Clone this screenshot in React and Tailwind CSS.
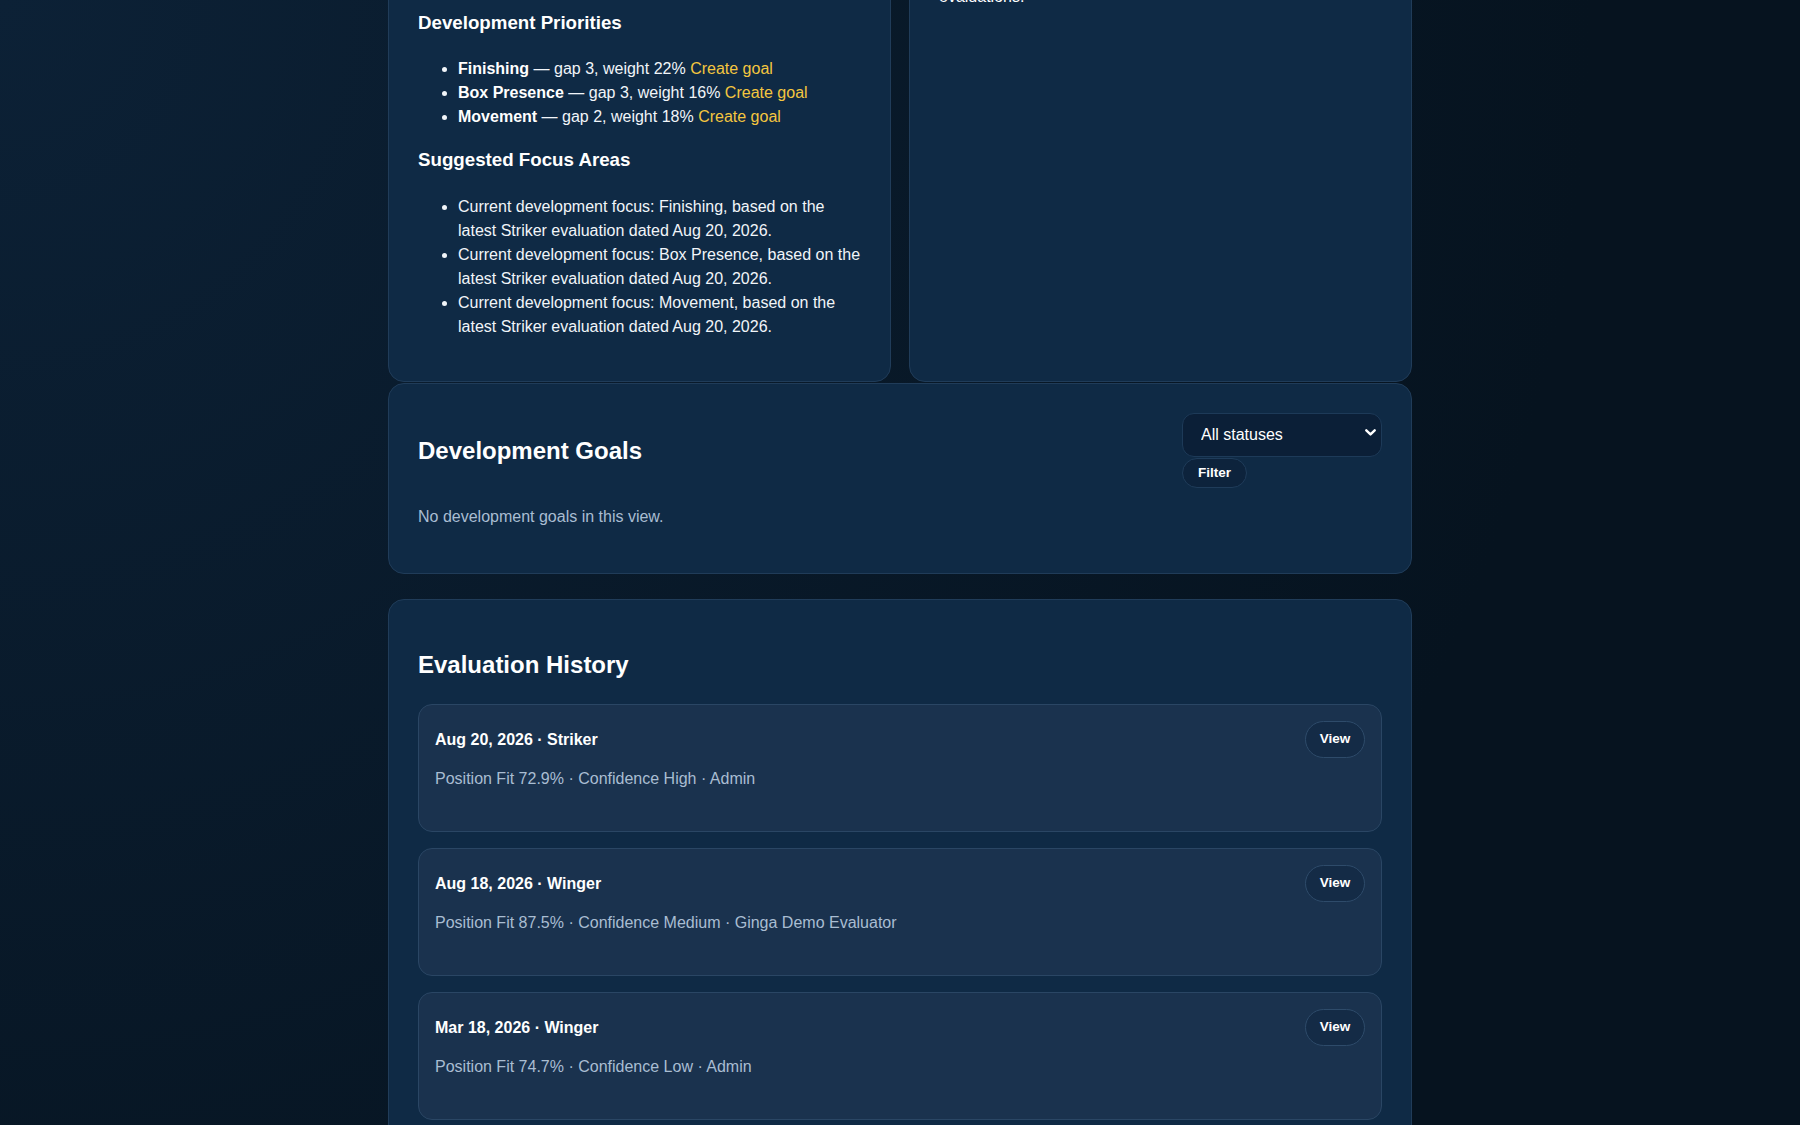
const priorities = [
  { skill: 'Finishing', gap: 3, weight: 22 },
  { skill: 'Box Presence', gap: 3, weight: 16 },
  { skill: 'Movement', gap: 2, weight: 18 },
]

const evaluations = [
  { date: 'Aug 20, 2026', position: 'Striker', fit: '72.9', confidence: 'High', evaluator: 'Admin' },
  { date: 'Aug 18, 2026', position: 'Winger', fit: '87.5', confidence: 'Medium', evaluator: 'Ginga Demo Evaluator' },
  { date: 'Mar 18, 2026', position: 'Winger', fit: '74.7', confidence: 'Low', evaluator: 'Admin' },
]

const card = 'rounded-2xl border border-[#203c59] bg-[#0f2a45] p-[29px]'

function ChevronDown() {
  return (
    <svg width="11" height="7" viewBox="0 0 11 7" fill="none" className="text-white">
      <path d="M1.3 1.3 5.5 5.4 9.7 1.3" stroke="currentColor" strokeWidth="2.4" strokeLinecap="round" strokeLinejoin="round" />
    </svg>
  )
}

function PlanCard() {
  const latest = evaluations[0]
  return (
    <div className={card}>
      <h3 className="mt-[24px] text-[18.72px] font-bold leading-[28px] text-white">Development Priorities</h3>
      <ul className="mt-[20px] list-disc pl-10 text-base leading-6">
        {priorities.map(p => (
          <li key={p.skill}>
            <strong className="font-bold text-white">{p.skill}</strong> — gap {p.gap}, weight {p.weight}%{' '}
            <a href="#" className="text-[#f4c63f]">Create goal</a>
          </li>
        ))}
      </ul>
      <h3 className="mt-[17px] text-[18.72px] font-bold leading-[28px] text-white">Suggested Focus Areas</h3>
      <ul className="mt-[21px] mb-[13px] -mr-[2px] list-disc pl-10 text-base leading-6">
        {priorities.map(p => (
          <li key={p.skill}>
            Current development focus: {p.skill}, based on the latest {latest.position} evaluation dated {latest.date}.
          </li>
        ))}
      </ul>
    </div>
  )
}

function GoalsCard() {
  return (
    <div className={`${card} mt-[1px]`}>
      <div className="flex items-center justify-between">
        <h2 className="text-2xl font-bold leading-[28px] text-white">Development Goals</h2>
        <form className="flex flex-col items-start gap-[1px]">
          <div className="relative">
            <select className="h-[44px] w-[200px] appearance-none rounded-[12px] border border-[#1d3a58] bg-[#0b1f37] pl-[18px] text-base text-white outline-none">
              <option>All statuses</option>
              <option>Active</option>
              <option>Completed</option>
            </select>
            <span className="pointer-events-none absolute right-[6px] top-[16px]">
              <ChevronDown />
            </span>
          </div>
          <button type="button" className="h-[30px] w-[65px] rounded-full border border-[#1f3c5a] bg-[#0d233c] text-[13.5px] font-bold text-white">
            Filter
          </button>
        </form>
      </div>
      <p className="mt-[17px] mb-[15px] text-base leading-6 text-[#a9bdd2]">No development goals in this view.</p>
    </div>
  )
}

function HistoryCard() {
  return (
    <div className={`${card} mt-[25px]`}>
      <h2 className="mt-[22px] mb-[25px] text-2xl font-bold leading-[28px] text-white">Evaluation History</h2>
      <div className="flex flex-col gap-4">
        {evaluations.map(e => (
          <div key={e.date} className="rounded-[14px] border border-[#2a4664] bg-[#1a324e] px-4 pt-4 pb-[40px]">
            <div className="flex h-[37px] items-center justify-between">
              <span className="text-base font-bold text-white">
                {e.date} · {e.position}
              </span>
              <button type="button" className="h-[37px] w-[60px] rounded-full border border-[#2e4b6a] bg-[#142b46] text-[13.5px] font-bold text-white">
                View
              </button>
            </div>
            <p className="mt-[9px] text-base leading-6 text-[#a9bdd2]">
              Position Fit {e.fit}% · Confidence {e.confidence} · {e.evaluator}
            </p>
          </div>
        ))}
      </div>
    </div>
  )
}

export default function App() {
  return (
    <div className="h-[1125px] overflow-hidden bg-[radial-gradient(circle_at_top_left,#0c2136,#06131f_75%)] font-['Liberation_Sans',Arial,sans-serif] text-[#f1f5f9]">
      <div className="mx-auto -mt-[45px] w-[1024px]">
        <div className="grid grid-cols-2 gap-[18px]">
          <PlanCard />
          <div className={card}>
            <p className="text-base leading-6 text-white">evaluations.</p>
          </div>
        </div>
        <GoalsCard />
        <HistoryCard />
      </div>
    </div>
  )
}
